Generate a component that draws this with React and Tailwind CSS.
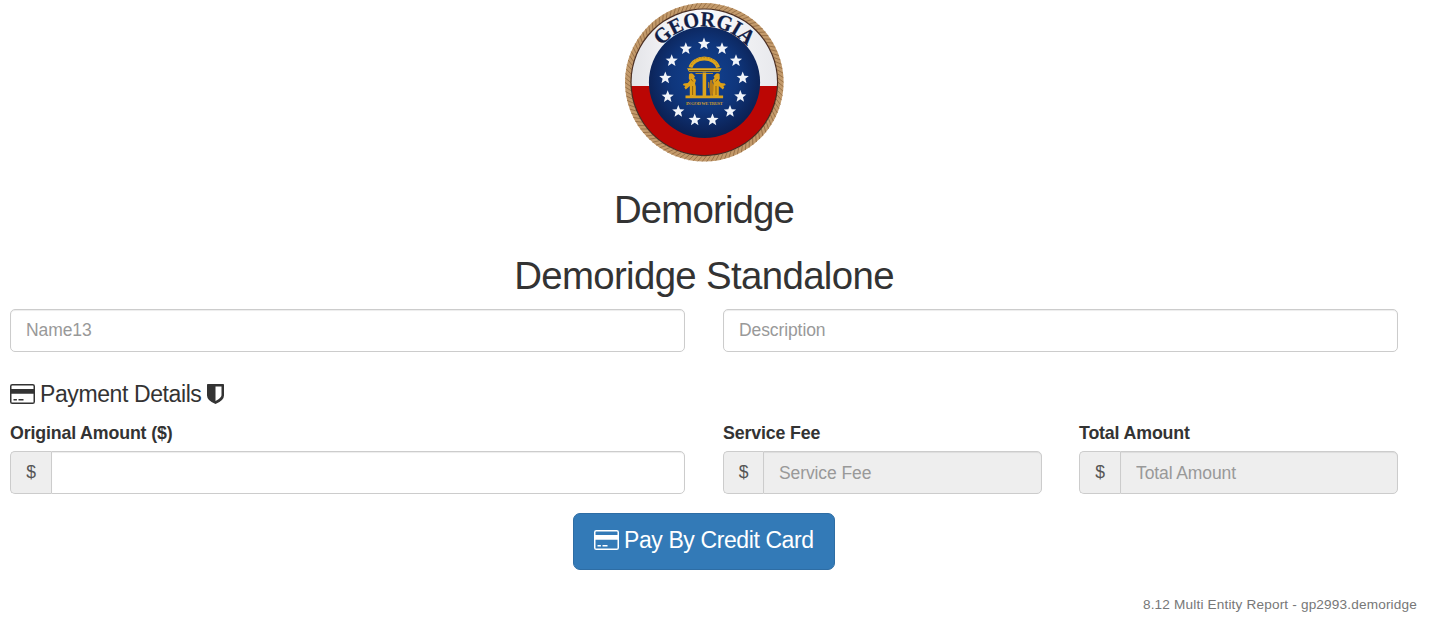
import React from "react";

const STARS = [
  [90, 44], [108, 48.7], [122, 60.7], [128.7, 78], [126.3, 96.5], [116, 111.5], [98.5, 120],
  [80.7, 120], [64.3, 111.5], [53.7, 96.7], [51.3, 78], [57.7, 60.7], [71.8, 48.7],
];

const CX = 90.3;
const CY = 82.3;

function starPoints(cx, cy, outer, inner) {
  return Array.from({ length: 10 }, (_, i) => {
    const r = i % 2 ? inner : outer;
    const a = -Math.PI / 2 + (i * Math.PI) / 5;
    return `${(cx + r * Math.cos(a)).toFixed(2)},${(cy + r * Math.sin(a)).toFixed(2)}`;
  }).join(" ");
}

// Slanted strands between the inner and outer edge of the rope.
const ROPE = Array.from({ length: 110 }, (_, i) => {
  const a = (i * 2 * Math.PI) / 110;
  const b = a + 0.055;
  return `M${(CX + 73.8 * Math.cos(a)).toFixed(2)} ${(CY + 73.8 * Math.sin(a)).toFixed(2)}L${(CX + 79.2 * Math.cos(b)).toFixed(2)} ${(CY + 79.2 * Math.sin(b)).toFixed(2)}`;
}).join("");

function Figure({ flip }) {
  return (
    <g transform={flip ? "translate(180.6 0) scale(-1 1)" : undefined}>
      <path d="M75 74q2.500-1.500 4.500.500l1.500 2-1 1.500 2 2-1 3.500.800 3v9.500h-6V86l-4 3.500-1.500-2 1-1.500-2.500-1 1-1.500 4-.500 2-2.500-1-2z" fill="#dca018" />
      <path d="M77 79l2 2.500M78.600 86v9" stroke="#76500f" strokeWidth=".8" />
    </g>
  );
}

function Seal() {
  return (
    <svg width="180" height="168" viewBox="0 0 180 168" className="block shrink-0" role="img" aria-label="Georgia">
      <defs>
        <radialGradient id="navy" cx=".5" cy=".45" r=".55">
          <stop offset="0" stopColor="#124292" />
          <stop offset=".55" stopColor="#0f367c" />
          <stop offset="1" stopColor="#0b1f50" />
        </radialGradient>
        <linearGradient id="silver" x1="0" y1="0" x2="1" y2="0">
          <stop offset="0" stopColor="#e0e1e5" />
          <stop offset=".25" stopColor="#f1f1f4" />
          <stop offset=".5" stopColor="#fafafc" />
          <stop offset="1" stopColor="#e6e7eb" />
        </linearGradient>
        <clipPath id="field"><circle cx={CX} cy={CY} r="72.700" /></clipPath>
        <path id="sealArc" d="M34.300 82.500A56 56 0 0 1 146.300 82.500" />
      </defs>
      <circle cx={CX} cy={CY} r="76.300" fill="none" stroke="#c39a6b" strokeWidth="6" />
      <path d={ROPE} stroke="#9a7248" strokeWidth="1" fill="none" />
      <circle cx={CX} cy={CY} r="73.900" fill="#4a2d20" />
      <g clipPath="url(#field)">
        <path d="M10 5h160v81H10z" fill="url(#silver)" />
        <path d="M10 86h160v75H10z" fill="#bb0604" />
      </g>
      <circle cx="90.500" cy="82.300" r="55.600" fill="url(#navy)" />
      <text className="font-['Liberation_Serif',serif] font-bold" fontSize="21.500" fill="#111d45" stroke="#111d45" strokeWidth=".3" textAnchor="middle">
        <textPath href="#sealArc" startOffset="50%" textLength="97" lengthAdjust="spacingAndGlyphs">GEORGIA</textPath>
      </text>
      {STARS.map(([x, y]) => (
        <polygon key={`${x}-${y}`} points={starPoints(x, y, 6.400, 2.800)} fill="#f0f4fa" />
      ))}
      <path d="M76.500 67.500A14 10.800 0 0 1 104.100 67.500" fill="none" stroke="#dda51c" strokeWidth="3.800" />
      <path d="M77.500 65A13 9 0 0 1 103.100 65" fill="none" stroke="#a37418" strokeWidth=".8" strokeDasharray="1.500 1.500" />
      <path d="M73 68.200h34.600l-2 3.600H75z" fill="#e3ae22" />
      <path d="M75 70.500h30.600" stroke="#6b4710" strokeWidth=".9" />
      <path d="M81.500 73.500h7M92 73.500h7" stroke="#c38b18" strokeWidth="1.200" />
      <Figure />
      <Figure flip />
      <path d="M88.600 72.500h3.600V96h-3.600z" fill="#dda51c" />
      <path d="M96.300 80h2.200v3l1 1v6l-1 6h-2.200l-.8-6v-6z" fill="#b67d18" />
      <path d="M94.500 82v6" stroke="#c38b18" strokeWidth=".8" />
      <path d="M71.500 95.600h37.600v2.600H71.500z" fill="#dba31c" />
      <text className="font-['Liberation_Serif',serif] font-bold" x="90.400" y="104.700" fontSize="4.600" fill="#c79a32" textAnchor="middle" textLength="37">IN GOD WE TRUST</text>
    </svg>
  );
}

function CardIcon() {
  return (
    <svg width="25" height="20" viewBox="0 0 25 20" fill="currentColor" className="block shrink-0">
      <path fillRule="evenodd" d="M2.300 0h20.400Q25 0 25 2.200v15.600Q25 20 22.700 20H2.300Q0 20 0 17.800V2.200Q0 0 2.300 0zM2.200 1.400q-.7 0-.7.700V5h22V2.100q0-.7-.7-.7zM1.500 9.700v8.200q0 .7.700.7h20.600q.7 0 .7-.7V9.700z" />
      <path d="M3.500 15h3.400v1.400H3.500zM8.500 15h5v1.400h-5z" />
    </svg>
  );
}

function ShieldIcon() {
  return (
    <svg width="17" height="20" viewBox="0 0 17 20" fill="currentColor" className="block shrink-0">
      <path fillRule="evenodd" d="M.800 0h15.400q.800 0 .800.800v10.700q0 5-8.500 8.500Q0 16.500 0 11.500V.800Q0 0 .800 0zM8.500 2.500v14.400q6-3 6-5.600V2.500z" />
    </svg>
  );
}

const inputClass =
  "block h-[43px] min-w-0 w-full border border-[#ccc] px-[15px] text-[17.5px] tracking-[-0.1px] text-[#555] outline-none placeholder:text-[#999] placeholder:opacity-100 shadow-[inset_0_1px_1px_rgba(0,0,0,0.075)]";

function AmountField({ label, placeholder, readOnly, addonWidth = "w-[41px]" }) {
  return (
    <label className="flex flex-1 flex-col">
      <span className="mb-[5px] mt-px h-[25px] text-[17.8px] font-bold leading-[25px] tracking-[-0.15px] text-[#333]">{label}</span>
      <span className="flex">
        <span className={`${addonWidth} flex h-[43px] shrink-0 items-center justify-center rounded-l-[5px] border border-r-0 border-[#ccc] bg-[#eee] text-[17.5px] text-[#555]`}>$</span>
        <input
          className={`${inputClass} rounded-r-[5px] pt-px ${readOnly ? "bg-[#eee]" : "bg-white"}`}
          placeholder={placeholder}
          readOnly={readOnly}
        />
      </span>
    </label>
  );
}

export default function App() {
  return (
    <main className="h-[625px] overflow-hidden bg-white pl-2.5 font-['Liberation_Sans',Arial,sans-serif] text-[#333]">
      <div className="flex w-[1388px] flex-col">
        <header className="flex flex-col items-center">
          <Seal />
          <h1 className="mt-[21px] h-[41px] text-[38.4px] leading-[41px] tracking-[-0.85px]">Demoridge</h1>
          <h2 className="mt-[25px] h-[41px] text-[38.4px] leading-[41px] tracking-[-0.65px]">Demoridge Standalone</h2>
        </header>
        <div className="mt-[13px] grid grid-cols-2 gap-[38px]">
          <input className={`${inputClass} rounded-[5px] pb-px`} placeholder="Name13" />
          <input className={`${inputClass} rounded-[5px] pb-px`} placeholder="Description" />
        </div>
        <h3 className="mt-[30px] flex h-6 items-center text-[23px] leading-6 tracking-[-0.4px]">
          <CardIcon />
          <span className="ml-[5px] mr-[6px]">Payment Details</span>
          <ShieldIcon />
        </h3>
        <div className="mt-[14px] grid grid-cols-2 gap-[38px]">
          <AmountField label="Original Amount ($)" />
          <div className="flex gap-[37px]">
            <AmountField label="Service Fee" placeholder="Service Fee" readOnly addonWidth="w-[40px]" />
            <AmountField label="Total Amount" placeholder="Total Amount" readOnly />
          </div>
        </div>
        <button className="mt-[19px] flex h-[57px] w-[262px] items-center self-center rounded-[7px] border border-[#2e6da4] bg-[#337ab7] pb-[3px] pl-5 text-[23px] tracking-[-0.4px] text-white">
          <CardIcon />
          <span className="ml-[5px] whitespace-nowrap">Pay By Credit Card</span>
        </button>
      </div>
      <footer className="mt-[25px] pr-[33px] text-right text-[13.6px] leading-5 tracking-[0.17px] text-[#777]">8.12 Multi Entity Report - gp2993.demoridge</footer>
    </main>
  );
}
